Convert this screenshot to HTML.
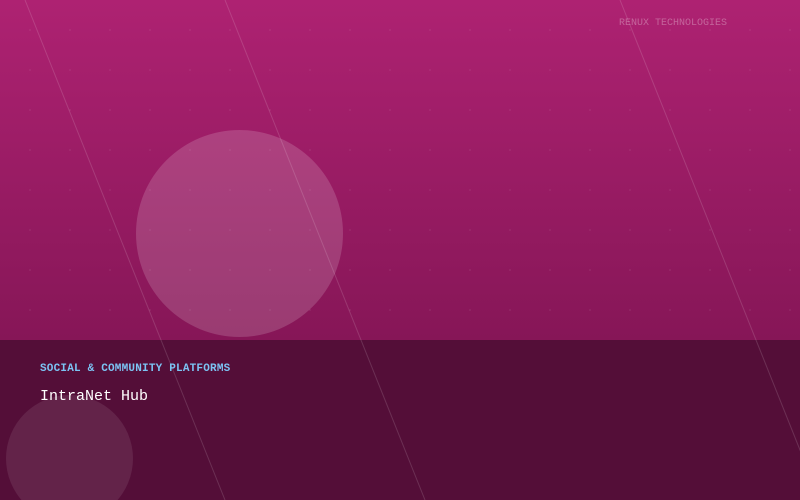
<!DOCTYPE html>
<html><head><style>
html,body{margin:0;padding:0;width:800px;height:500px;overflow:hidden}
body{position:relative;background:linear-gradient(#ae2272,#861657 340px,#861657);font-family:"Liberation Mono",monospace}
.dots{position:absolute;left:0;top:0;width:800px;height:340px;background-image:radial-gradient(circle,rgba(255,255,255,0.06) 0.8px,transparent 1.2px);background-size:40px 40px;background-position:10px 10px}
.c1{position:absolute;left:136px;top:130px;width:207px;height:207px;border-radius:50%;background:rgba(255,255,255,0.16)}
.panel{position:absolute;left:0;top:340px;width:800px;height:160px;background:#540e38;overflow:hidden}
.c2{position:absolute;left:6px;top:55px;width:127px;height:127px;border-radius:50%;background:rgba(255,255,255,0.09)}
svg{position:absolute;left:0;top:0}
.cat{position:absolute;left:40px;top:363px;font-size:11px;font-weight:bold;color:#7cc4f4;letter-spacing:0.2px}
.title{position:absolute;left:40px;top:388px;font-size:15px;color:#fff}
.brand{position:absolute;left:619px;top:18px;font-size:10px;color:rgba(255,255,255,0.3)}
</style></head><body>
<div class="dots"></div>
<div class="c1"></div>
<div class="panel"><div class="c2"></div></div>
<svg width="800" height="500"><g stroke="rgba(255,255,255,0.14)" stroke-width="1"><line x1="25" y1="0" x2="225" y2="500"/><line x1="225" y1="0" x2="425" y2="500"/><line x1="620" y1="0" x2="820" y2="500"/></g></svg>
<div class="brand">RENUX TECHNOLOGIES</div>
<div class="cat">SOCIAL &amp; COMMUNITY PLATFORMS</div>
<div class="title">IntraNet Hub</div>
</body></html>
